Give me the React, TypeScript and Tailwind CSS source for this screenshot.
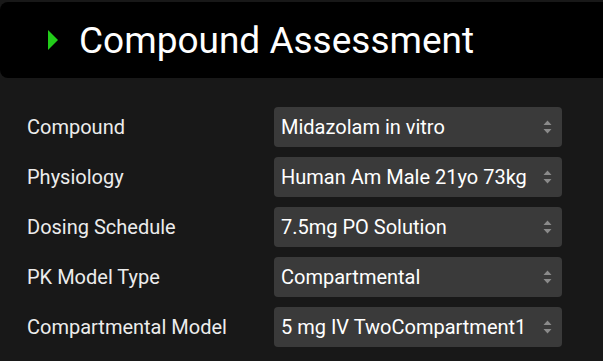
import React from "react";

const rows: [string, string][] = [
  ["Compound", "Midazolam in vitro"],
  ["Physiology", "Human Am Male 21yo 73kg"],
  ["Dosing Schedule", "7.5mg PO Solution"],
  ["PK Model Type", "Compartmental"],
  ["Compartmental Model", "5 mg IV TwoCompartment1"],
];

function Arrows() {
  return (
    <svg width="9" height="14" viewBox="0 0 9 14" className="shrink-0">
      <polygon points="4.5,0.5 8.5,5 0.5,5" fill="#8a8a8a" />
      <polygon points="0.5,9 8.5,9 4.5,13.5" fill="#8a8a8a" />
    </svg>
  );
}

export default function App() {
  return (
    <div className="w-[603px] h-[361px] bg-[#181818] overflow-hidden font-['Roboto',sans-serif] pt-[2px]">
      <div className="h-[76px] bg-black rounded-l-[8px] flex items-center pl-[48px]">
        <svg width="10" height="20" viewBox="0 0 10 20" className="shrink-0">
          <polygon points="0,0 10,10 0,20" fill="#22cc1a" />
        </svg>
        <span className="ml-[21px] text-[37px] text-white leading-none">Compound Assessment</span>
      </div>
      <div className="flex flex-col gap-[10px] pt-[29px]">
        {rows.map(([label, value]) => (
          <div key={label} className="flex items-center h-[40px]">
            <div className="w-[274px] pl-[27px] text-[20px] text-[#ececec]">{label}</div>
            <div className="w-[288px] h-[40px] bg-[#3a3a3a] rounded-[4px] flex items-center pl-[7px] pr-[10px] justify-between">
              <span className="text-[20px] text-white whitespace-nowrap">{value}</span>
              <Arrows />
            </div>
          </div>
        ))}
      </div>
    </div>
  );
}
